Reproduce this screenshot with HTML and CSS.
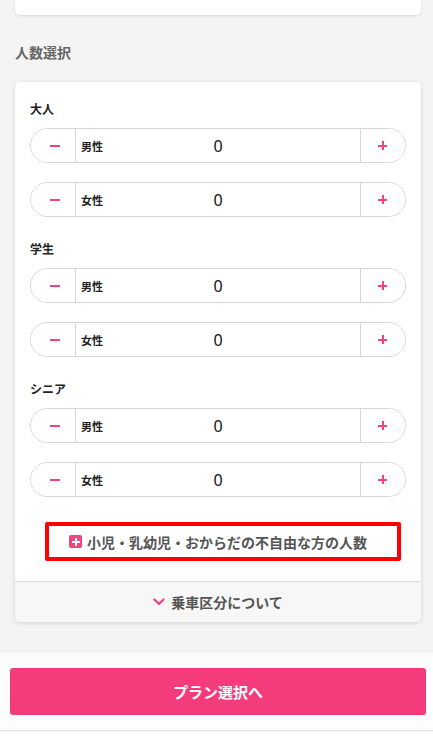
FILE: index.html
```html
<!DOCTYPE html>
<html lang="ja">
<head>
<meta charset="utf-8">
<title>人数選択</title>
<link rel="stylesheet" href="styles.css">
</head>
<body>
<div class="page">
  <div class="top-card"></div>
  <h2 class="section-title">人数選択</h2>
  <div class="card">
    <div class="card-body">
      <div class="group">
        <div class="group-label">大人</div>
        <div class="stepper"><button class="btn minus"><span class="bar"></span></button><div class="mid"><span class="lbl">男性</span><span class="num">0</span></div><button class="btn plus"><span class="bar"></span><span class="bar v"></span></button></div>
        <div class="stepper"><button class="btn minus"><span class="bar"></span></button><div class="mid"><span class="lbl">女性</span><span class="num">0</span></div><button class="btn plus"><span class="bar"></span><span class="bar v"></span></button></div>
      </div>
      <div class="group">
        <div class="group-label">学生</div>
        <div class="stepper"><button class="btn minus"><span class="bar"></span></button><div class="mid"><span class="lbl">男性</span><span class="num">0</span></div><button class="btn plus"><span class="bar"></span><span class="bar v"></span></button></div>
        <div class="stepper"><button class="btn minus"><span class="bar"></span></button><div class="mid"><span class="lbl">女性</span><span class="num">0</span></div><button class="btn plus"><span class="bar"></span><span class="bar v"></span></button></div>
      </div>
      <div class="group">
        <div class="group-label">シニア</div>
        <div class="stepper"><button class="btn minus"><span class="bar"></span></button><div class="mid"><span class="lbl">男性</span><span class="num">0</span></div><button class="btn plus"><span class="bar"></span><span class="bar v"></span></button></div>
        <div class="stepper"><button class="btn minus"><span class="bar"></span></button><div class="mid"><span class="lbl">女性</span><span class="num">0</span></div><button class="btn plus"><span class="bar"></span><span class="bar v"></span></button></div>
      </div>
      <button class="extra"><span class="plus-icon"></span>小児・乳幼児・おからだの不自由な方の人数</button>
    </div>
    <div class="card-foot"><svg class="chev" width="12" height="8" viewBox="0 0 12 8"><path d="M1.5 1.5 L6 6 L10.5 1.5" fill="none" stroke="#f0457a" stroke-width="2.2" stroke-linecap="round" stroke-linejoin="round"/></svg>乗車区分について</div>
  </div>
</div>
<div class="bottom-bar">
  <button class="primary">プラン選択へ</button>
</div>
</body>
</html>
```

FILE: styles.css
```css
* { box-sizing: border-box; }
html, body { margin: 0; padding: 0; }
body {
  background: #ffffff;
  font-family: "Noto Sans CJK JP", "Noto Sans", sans-serif;
  color: #222;
}
.page {
  background: #f4f4f4;
  padding: 0 12px 31px 15px;
}
.top-card {
  height: 15px;
  background: #fff;
  border-radius: 0 0 5px 5px;
  box-shadow: 0 1px 3px rgba(0,0,0,0.12);
  width: 406px;
}
.section-title {
  margin: 0;
  padding-top: 26px;
  height: 67px;
  font-size: 14px;
  line-height: 22px;
  font-weight: bold;
  color: #666;
}
.card {
  width: 406px;
  background: #fff;
  border-radius: 5px;
  box-shadow: 0 1px 4px rgba(0,0,0,0.14);
  overflow: hidden;
}
.card-body {
  padding: 18px 15px 20px 15px;
  display: flex;
  flex-direction: column;
}
.group {
  display: flex;
  flex-direction: column;
  gap: 19px;
  margin-bottom: 23px;
}
.group:last-of-type { margin-bottom: 25px; }
.group-label {
  font-size: 12px;
  line-height: 18px;
  font-weight: bold;
  color: #222;
  margin-bottom: -9px;
}
.stepper {
  display: flex;
  height: 35px;
  border: 1px solid #d6d6d6;
  border-radius: 18px;
  overflow: hidden;
}
.btn {
  border: 0;
  background: #fff;
  padding: 0;
  margin: 0;
  width: 45px;
  flex: none;
  position: relative;
  display: flex;
  align-items: center;
  justify-content: center;
}
.btn.minus { border-right: 1px solid #d6d6d6; }
.btn.plus { border-left: 1px solid #d6d6d6; width: 45px; }
.bar {
  display: block;
  width: 10px;
  height: 2px;
  background: #f0457a;
}
.btn.minus .bar { margin-left: 4px; }
.btn.plus .bar { position: absolute; left: 50%; top: 50%; width: 9px; margin: -1px 0 0 -5px; }
.btn.plus .bar.v { width: 2px; height: 9px; margin: -5px 0 0 -1.5px; }
.mid {
  flex: 1;
  display: grid;
  grid-template-columns: 1fr auto 1fr;
  align-items: center;
}
.lbl {
  padding-left: 5px;
  font-size: 11px;
  font-weight: bold;
  color: #222;
}
.num {
  font-size: 16px;
  color: #111;
  font-family: "Noto Sans", "Noto Sans CJK JP", sans-serif;
}
.extra {
  align-self: flex-start;
  width: 356px;
  height: 39px;
  margin-left: 15px;
  border: 4px solid #ff0000;
  border-radius: 2px;
  background: #fff;
  font-family: inherit;
  font-size: 14px;
  font-weight: bold;
  color: #555;
  display: flex;
  align-items: center;
  justify-content: center;
  gap: 5px;
  padding: 0 10px 0 0;
}
.plus-icon {
  width: 13px;
  height: 13px;
  border-radius: 2px;
  background: #f0457a;
  position: relative;
  flex: none;
}
.plus-icon::before, .plus-icon::after {
  content: "";
  position: absolute;
  background: #fff;
  left: 50%; top: 50%;
}
.plus-icon::before { width: 8px; height: 2px; margin: -1px 0 0 -4px; }
.plus-icon::after { width: 2px; height: 8px; margin: -4px 0 0 -1px; }
.card-foot {
  height: 41px;
  border-top: 1px solid #dcdcdc;
  background: #f7f7f7;
  display: flex;
  align-items: center;
  justify-content: center;
  gap: 6px;
  font-size: 14px;
  font-weight: bold;
  color: #555;
}
.chev { flex: none; }
.bottom-bar {
  background: #fdfdfd;
  padding: 15px 7px 15px 10px;
  border-bottom: 1px solid #e2e2e2;
}
.primary {
  display: block;
  width: 416px;
  height: 47px;
  border: 0;
  border-radius: 3px;
  background: #f43c7c;
  color: #fff;
  font-family: inherit;
  font-size: 15px;
  font-weight: bold;
}
```
